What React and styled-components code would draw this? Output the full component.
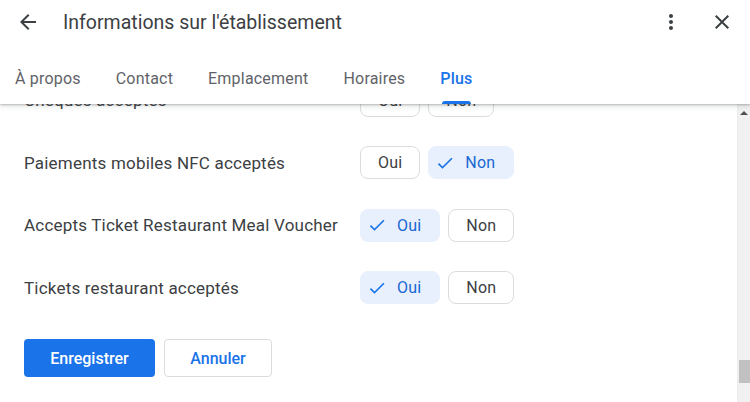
import React, { useState } from "react";
import styled, { createGlobalStyle } from "styled-components";

const GlobalStyle = createGlobalStyle`
  html, body {
    margin: 0;
    padding: 0;
    background: #fff;
    font-family: Roboto, "Liberation Sans", Arial, sans-serif;
    overflow: hidden;
  }
  * { box-sizing: border-box; }
`;

const TABS = ["À propos", "Contact", "Emplacement", "Horaires", "Plus"];

const ROWS = [
  { label: "Chèques acceptés", value: null },
  { label: "Paiements mobiles NFC acceptés", value: "non" },
  { label: "Accepts Ticket Restaurant Meal Voucher", value: "oui" },
  { label: "Tickets restaurant acceptés", value: "oui" },
];

const BackIcon = () => (
  <svg width="24" height="24" viewBox="0 0 24 24">
    <path d="M20 11H7.83l5.59-5.59L12 4l-8 8 8 8 1.41-1.41L7.83 13H20v-2z" fill="#3c4043" />
  </svg>
);

const MoreIcon = () => (
  <svg width="24" height="24" viewBox="0 0 24 24">
    <path
      d="M12 8c1.1 0 2-.9 2-2s-.9-2-2-2-2 .9-2 2 .9 2 2 2zm0 2c-1.1 0-2 .9-2 2s.9 2 2 2 2-.9 2-2-.9-2-2-2zm0 6c-1.1 0-2 .9-2 2s.9 2 2 2 2-.9 2-2-.9-2-2-2z"
      fill="#3c4043"
    />
  </svg>
);

const CloseIcon = () => (
  <svg width="24" height="24" viewBox="0 0 24 24">
    <path
      d="M19 6.41L17.59 5 12 10.59 6.41 5 5 6.41 10.59 12 5 17.59 6.41 19 12 13.41 17.59 19 19 17.59 13.41 12z"
      fill="#3c4043"
    />
  </svg>
);

const CheckIcon = () => (
  <svg width="20" height="20" viewBox="0 0 24 24">
    <path d="M9 16.17L4.83 12l-1.42 1.41L9 19 21 7l-1.41-1.41z" fill="#1a73e8" />
  </svg>
);

const App = () => {
  const [answers, setAnswers] = useState(ROWS.map((r) => r.value));

  const pick = (i, v) => {
    const next = [...answers];
    next[i] = next[i] === v ? null : v;
    setAnswers(next);
  };

  return (
    <>
      <GlobalStyle />
      <Page>
        <Header>
          <TopBar>
            <IconBtn>
              <BackIcon />
            </IconBtn>
            <Title>Informations sur l'établissement</Title>
            <IconBtn>
              <MoreIcon />
            </IconBtn>
            <IconBtn>
              <CloseIcon />
            </IconBtn>
          </TopBar>
          <Tabs>
            {TABS.map((t) => (
              <Tab key={t} active={t === "Plus"}>
                {t}
              </Tab>
            ))}
          </Tabs>
        </Header>

        <Body>
          <Content>
            <List>
              {ROWS.map((row, i) => (
                <Row key={row.label}>
                  <Label>{row.label}</Label>
                  <Choices>
                    <Chip selected={answers[i] === "oui"} onClick={() => pick(i, "oui")}>
                      {answers[i] === "oui" && <CheckIcon />}
                      Oui
                    </Chip>
                    <Chip selected={answers[i] === "non"} onClick={() => pick(i, "non")}>
                      {answers[i] === "non" && <CheckIcon />}
                      Non
                    </Chip>
                  </Choices>
                </Row>
              ))}
            </List>
            <Actions>
              <PrimaryBtn>Enregistrer</PrimaryBtn>
              <SecondaryBtn>Annuler</SecondaryBtn>
            </Actions>
          </Content>
          <ScrollTrack>
            <ScrollArrow />
            <ScrollSpace />
            <ScrollThumb />
            <ScrollRest />
          </ScrollTrack>
        </Body>
      </Page>
    </>
  );
};

export default App;

const Page = styled.div`
  width: 750px;
  height: 402px;
  display: flex;
  flex-direction: column;
  overflow: hidden;
`;

const Header = styled.header`
  position: relative;
  z-index: 2;
  background: #fff;
  height: 104px;
  flex-shrink: 0;
  box-shadow: 0 1px 2px rgba(60, 64, 67, 0.3), 0 2px 6px rgba(60, 64, 67, 0.15);
`;

const TopBar = styled.div`
  height: 44px;
  display: flex;
  align-items: center;
  padding: 0 16px;
`;

const IconBtn = styled.button`
  width: 24px;
  height: 24px;
  padding: 0;
  border: none;
  background: none;
  display: flex;
  align-items: center;
  justify-content: center;
  cursor: pointer;

  & + & {
    margin-left: 27px;
  }
`;

const Title = styled.h1`
  flex: 1;
  margin: 0 0 0 23px;
  font-size: 19.5px;
  font-weight: 400;
  color: #3c4043;
  white-space: nowrap;
`;

const Tabs = styled.nav`
  height: 60px;
  display: flex;
  padding-left: 15px;
  gap: 35px;
`;

const Tab = styled.div`
  position: relative;
  display: flex;
  align-items: center;
  height: 100%;
  padding-top: 8px;
  font-size: 16px;
  letter-spacing: 0.2px;
  font-weight: ${(p) => (p.active ? 500 : 400)};
  color: ${(p) => (p.active ? "#1a73e8" : "#5f6368")};

  &::after {
    content: "";
    display: ${(p) => (p.active ? "block" : "none")};
    position: absolute;
    left: 2px;
    right: 2px;
    bottom: 0;
    height: 3px;
    border-radius: 3px 3px 0 0;
    background: #1a73e8;
  }
`;

const Body = styled.div`
  flex: 1;
  display: flex;
  min-height: 0;
`;

const Content = styled.main`
  flex: 1;
  overflow: hidden;
  padding: 0 24px;
`;

const List = styled.div`
  margin-top: -35px;
  display: flex;
  flex-direction: column;
`;

const Row = styled.div`
  height: 62.5px;
  display: flex;
  align-items: center;
`;

const Label = styled.span`
  width: 336px;
  font-size: 17px;
  letter-spacing: 0.2px;
  color: #3c4043;
  white-space: nowrap;
`;

const Choices = styled.div`
  display: flex;
  gap: 8px;
`;

const Chip = styled.button`
  height: 33px;
  display: flex;
  align-items: center;
  gap: 10px;
  padding: ${(p) => (p.selected ? "0 18px 0 6px" : "0 17px")};
  border-radius: 8px;
  border: 1px solid ${(p) => (p.selected ? "#e8f0fe" : "#dadce0")};
  background: ${(p) => (p.selected ? "#e8f0fe" : "#fff")};
  color: ${(p) => (p.selected ? "#1967d2" : "#3c4043")};
  font-family: inherit;
  font-size: 16px;
  letter-spacing: 0.2px;
  font-weight: 400;
  cursor: pointer;
`;

const Actions = styled.div`
  margin-top: 20px;
  display: flex;
  gap: 9px;
`;

const PrimaryBtn = styled.button`
  height: 38px;
  width: 131px;
  border-radius: 4px;
  border: none;
  background: #1a73e8;
  color: #fff;
  font-family: inherit;
  font-size: 16px;
  font-weight: 500;
  cursor: pointer;
`;

const SecondaryBtn = styled.button`
  height: 38px;
  width: 108px;
  border-radius: 4px;
  border: 1px solid #dadce0;
  background: #fff;
  color: #1a73e8;
  font-family: inherit;
  font-size: 16px;
  font-weight: 500;
  cursor: pointer;
`;

const ScrollTrack = styled.div`
  width: 13px;
  flex-shrink: 0;
  background: #f1f1f1;
  border-left: 1px solid #ececec;
  display: flex;
  flex-direction: column;
`;

const ScrollArrow = styled.div`
  height: 17px;
  display: flex;
  align-items: center;
  justify-content: center;

  &::before {
    content: "";
    border-left: 4px solid transparent;
    border-right: 4px solid transparent;
    border-bottom: 4px solid #505050;
  }
`;

const ScrollSpace = styled.div`
  flex: 1;
`;

const ScrollThumb = styled.div`
  height: 23px;
  margin-left: 1px;
  background: #c1c1c1;
`;

const ScrollRest = styled.div`
  height: 19px;
`;
